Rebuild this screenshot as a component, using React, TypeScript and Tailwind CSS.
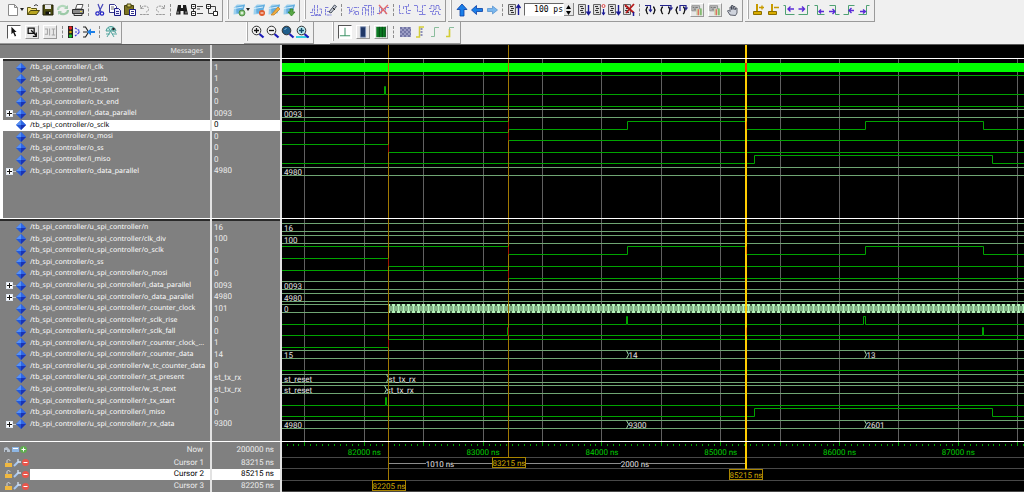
import React, { useEffect, useRef, useState } from 'react';
import clsx from 'clsx';

interface Signal {
  name: string;
  value: string;
  bus?: boolean;
  expandable?: boolean;
  clock?: boolean;
  dense?: number;
  // [time, level] for wires, [time, label] for buses
  points: [number, number | string][];
}

const T0 = 81307;
const T_END = 98000;
const SCALE = 0.1188;
const tx = (t: number) => (t - T0) * SCALE;
const px = (n: number) => Math.round(n - 0.5) + 0.5;

const SCLK: [number, number][] = [[T0, 1], [83215, 0], [84215, 1], [85215, 0], [86215, 1], [87215, 0]];
const MISO: [number, number][] = [[T0, 0], [85284, 1], [87284, 0]];

const TB_SIGNALS: Signal[] = [
  { name: '/tb_spi_controller/i_clk', value: '1', clock: true, points: [] },
  { name: '/tb_spi_controller/i_rstb', value: '1', points: [[T0, 1]] },
  { name: '/tb_spi_controller/i_tx_start', value: '0', points: [[T0, 0], [82168, 1], [82182, 0]] },
  { name: '/tb_spi_controller/o_tx_end', value: '0', points: [[T0, 0]] },
  { name: '/tb_spi_controller/i_data_parallel', value: '0093', bus: true, expandable: true, points: [[T0, '0093']] },
  { name: '/tb_spi_controller/o_sclk', value: '0', points: SCLK },
  { name: '/tb_spi_controller/o_mosi', value: '0', points: [[T0, 1], [83215, 0]] },
  { name: '/tb_spi_controller/o_ss', value: '0', points: [[T0, 1], [82205, 0]] },
  { name: '/tb_spi_controller/i_miso', value: '0', points: MISO },
  { name: '/tb_spi_controller/o_data_parallel', value: '4980', bus: true, expandable: true, points: [[T0, '4980']] },
];

const DUT = '/tb_spi_controller/u_spi_controller/';
const DUT_SIGNALS: Signal[] = [
  { name: DUT + 'n', value: '16', bus: true, points: [[T0, '16']] },
  { name: DUT + 'clk_div', value: '100', bus: true, points: [[T0, '100']] },
  { name: DUT + 'o_sclk', value: '0', points: SCLK },
  { name: '/tb_spi_controller/o_ss', value: '0', points: [[T0, 1], [82205, 0]] },
  { name: DUT + 'o_mosi', value: '0', points: [[T0, 1], [83215, 0]] },
  { name: DUT + 'i_data_parallel', value: '0093', bus: true, expandable: true, points: [[T0, '0093']] },
  { name: DUT + 'o_data_parallel', value: '4980', bus: true, expandable: true, points: [[T0, '4980']] },
  { name: DUT + 'r_counter_clock', value: '101', bus: true, dense: 82205, points: [[T0, '0']] },
  { name: DUT + 'r_sclk_rise', value: '0', points: [[T0, 0], [84205, 1], [84215, 0], [86205, 1], [86215, 0]] },
  { name: DUT + 'r_sclk_fall', value: '0', points: [[T0, 0], [83205, 1], [83215, 0], [85205, 1], [85215, 0], [87205, 1], [87215, 0]] },
  { name: DUT + 'r_counter_clock_...', value: '1', points: [[T0, 0], [82205, 1]] },
  { name: DUT + 'r_counter_data', value: '14', bus: true, points: [[T0, '15'], [84215, '14'], [86215, '13']] },
  { name: DUT + 'w_tc_counter_data', value: '0', points: [[T0, 0]] },
  { name: DUT + 'r_st_present', value: 'st_tx_rx', bus: true, points: [[T0, 'st_reset'], [82195, 'st_tx_rx']] },
  { name: DUT + 'w_st_next', value: 'st_tx_rx', bus: true, points: [[T0, 'st_reset'], [82180, 'st_tx_rx']] },
  { name: DUT + 'r_tx_start', value: '0', points: [[T0, 0], [82178, 1], [82190, 0]] },
  { name: DUT + 'i_miso', value: '0', points: MISO },
  { name: DUT + 'r_rx_data', value: '9300', bus: true, expandable: true, points: [[T0, '4980'], [84215, '9300'], [86215, '2601']] },
];

const CURSORS = [
  { name: 'Cursor 1', time: 83215 },
  { name: 'Cursor 2', time: 85215 },
  { name: 'Cursor 3', time: 82205 },
];

/* ---------- toolbar icons ---------- */

const edge = (d: string) => <path d={d} stroke="#4fa173" strokeWidth="1" fill="none" />;
const purple = (d: string) => <path d={d} stroke="#5a2bd8" strokeWidth="1.4" fill="none" />;
const ghost = (d: string) => <path d={d} stroke="#8080dc" strokeWidth="1" fill="none" strokeDasharray="3 .6" />;

const runDoc = (
  <>
    <path d="M1.500 1.500h7v10h-7z" fill="#dcdcdc" stroke="#666" strokeWidth="1" />
    <path d="M3 3.500h3M4 5.500h3M3 7.500h3M4 9.500h3" stroke="#333" strokeWidth="1" />
  </>
);
const box3d = (
  <>
    <path d="M2 4.500l3-3h8l-2.500 9-9 1z" fill="#9dd0ee" />
    <path d="M4 3.500l9-2-2.500 8-6 1z" fill="#62addf" />
    <path d="M2 5.500l9-1.500" stroke="#d7eefb" strokeWidth="1" />
  </>
);
const lens = (fill: string) => (
  <>
    <path d="M8.500 9l4 3.500" stroke="#1b1bb8" strokeWidth="2.200" />
    <circle cx="5.500" cy="5.500" r="4.300" fill={fill} stroke="#333" strokeWidth="1" />
  </>
);
const addCursor = (
  <>
    <path d="M5 1v8" stroke="#c79a00" strokeWidth="2" />
    <path d="M1.500 8.500h8v3h-8z" fill="#d9ac00" stroke="#8a6e00" strokeWidth="1" />
  </>
);
const braces = (
  <path d="M4 4c-2 0-1 2-2 3 1 1 0 3 2 4M9 4c2 0 1 2 2 3-1 1 0 3-2 4" stroke="#111" strokeWidth="1.300" fill="none" />
);

const ICONS: Record<string, React.ReactNode> = {
  new: <path d="M2.500 1.500h6l3 3v8h-9zM8.500 1.500v3h3" fill="#fff" stroke="#8a8a8a" />,
  open: (
    <>
      <path d="M1.500 11.500v-7h3l1 1h5v2" fill="#f3e27a" stroke="#5d5714" />
      <path d="M1.500 11.500l3-4h9l-3 4z" fill="#b8a520" stroke="#4a450e" />
      <path d="M8 3c2-2 3-1 4 0" stroke="#111" fill="none" />
    </>
  ),
  save: (
    <>
      <path d="M2 2h10v10H2z" fill="#4d4d10" stroke="#1c1c06" />
      <path d="M4 2h6v4H4z" fill="#e9e9e9" />
      <path d="M4.500 8.500h5v3h-5z" fill="#111" />
      <path d="M8 9h1.500v2H8z" fill="#ddd" />
    </>
  ),
  reload: (
    <>
      <path d="M2 7c0-4 6-6 9-2" stroke="#b2d8bb" strokeWidth="2.200" fill="none" />
      <path d="M12 7c0 4-6 6-9 2" stroke="#9ccaa8" strokeWidth="2.200" fill="none" />
      <path d="M12 2v4H8zM2 12V8h4z" fill="#a5cfb0" />
    </>
  ),
  print: (
    <>
      <path d="M4.500 6l1.500-4.500h6L10.500 6z" fill="#fff" stroke="#555" />
      <path d="M1.500 6.500h11v4h-11z" fill="#8a8a8a" stroke="#2e2e2e" />
      <path d="M3 10.500h8v2H3z" fill="#ddd" stroke="#333" />
      <path d="M9 8.500h2" stroke="#e3d343" />
    </>
  ),
  cut: (
    <>
      <path d="M5 1l3 8M10 1L6 9" stroke="#4646b8" strokeWidth="1.200" />
      <circle cx="4.500" cy="10.500" r="1.700" fill="none" stroke="#2323c4" strokeWidth="1.200" />
      <circle cx="9" cy="10.500" r="1.700" fill="none" stroke="#2323c4" strokeWidth="1.200" />
    </>
  ),
  copy: (
    <>
      <path d="M1.500 1.500h5l2 2v6h-7z" fill="#fff" stroke="#35358e" />
      <path d="M3 4h3M3 6h3" stroke="#777" />
      <path d="M6.500 5.500h4l2 2v5h-6z" fill="#e8e8ff" stroke="#1b1b86" />
      <path d="M8 8.500h3M8 10.500h3" stroke="#35358e" />
    </>
  ),
  paste: (
    <>
      <path d="M1.500 2.500h9v9h-9z" fill="#7c7421" stroke="#45400f" />
      <path d="M4 1h4v3H4z" fill="#d9d16d" stroke="#45400f" />
      <path d="M6.500 6.500h6v6h-6z" fill="#fff" stroke="#1b1b86" />
      <path d="M8 8.500h3M8 10.500h3" stroke="#35358e" />
    </>
  ),
  undo: <path d="M2.500 2v3.500H6M3 5C5 2 11 2.500 10.500 6.500 10.300 8 9 9 8 9M2 11.500h9" stroke="#9a9a9a" fill="none" strokeDasharray="2.500 .7" />,
  redo: <path d="M11.500 2v3.500H8M11 5C9 2 3 2.500 3.500 6.500 3.700 8 5 9 6 9M3 11.500h9" stroke="#9a9a9a" fill="none" strokeDasharray="2.500 .7" />,
  find: (
    <>
      <path d="M3 2h3v3h2V2h3l2 9.500H8.500V8h-3v3.500H1z" fill="#1c1c1c" />
      <path d="M3 8.500v2M11 8.500v2" stroke="#bbb" />
    </>
  ),
  collapse: (
    <>
      <path d="M1.500 1.500h4v4h-4zM1.500 8.500h4v4h-4z" fill="#fff" stroke="#222" />
      <path d="M2.500 3.500h2M2.500 10.500h2M7 3.500h6M7 10.500h6M7 6h3M3.500 5v3" stroke="#444" />
    </>
  ),
  expand: (
    <>
      <path d="M1.500 1.500h4v4h-4zM8.500 8.500h4v4h-4z" fill="#fff" stroke="#222" />
      <path d="M2.500 3.500h2M6 3.500h4.500v5M3.500 6v4.500h5" stroke="#444" fill="none" />
    </>
  ),
  wave1: (
    <>
      {box3d}
      <circle cx="10" cy="10" r="3" fill="#79b96b" stroke="#3b7a31" strokeWidth=".7" />
      <path d="M8.500 10h3M10 8.500v3" stroke="#fff" />
    </>
  ),
  wave2: (
    <>
      {box3d}
      <circle cx="10" cy="10" r="3" fill="#df5a2c" />
      <path d="M8.500 10h3" stroke="#fff" />
    </>
  ),
  wave3: (
    <>
      {box3d}
      <path d="M4 12l7-8 2 2-6 6z" fill="#efab42" stroke="#c17d1c" strokeWidth=".7" />
    </>
  ),
  wave4: (
    <>
      {box3d}
      <path d="M8 6h3v3h2l-3.500 4L6 9h2z" fill="#59a846" stroke="#2f7a20" strokeWidth=".7" />
    </>
  ),
  ghostClock: ghost('M1 9.500h2.500V6h2v5.500h6M5.500 2v4M8.500 2v8M2 12.500h10M10.500 6h2v5'),
  ghostPen: (
    <>
      {ghost('M1 4.500h4M1.500 6v6h6M3 8.500h4')}
      <path d="M5 9l5.500-7 2 1.500L7 10z" fill="#c6cad4" stroke="#4b5563" />
      <path d="M9 5l2 2" stroke="#222" />
    </>
  ),
  ghostCut: ghost('M1 4.500h2.500v4H6M3 11l4-7M6.500 8.500c2-3 3 1 1 3M8 4.500h5M9.500 8.500h3v3h-3z'),
  ghostPaste: ghost('M1.500 12V4.500h3v8M7.500 12.500V2.500h3v10M12.500 4v8M3 2.500h6M4 7h3'),
  ghostDelete: (
    <>
      {ghost('M1 10.500h2.500v-6h2v6M9.500 10.500v-6H13')}
      <path d="M3 2l8 9M12 2L3 11" stroke="#e46a6a" strokeWidth="1.400" />
    </>
  ),
  ghostInvert: ghost('M1.500 2v8.500h4M5.500 6V3.500h5V1M8.500 4v6.500h4M10 7.500h3'),
  ghostMirror: ghost('M1 2.500h3.500v6h5v-6H13M6 11.500h7M9.500 9v3'),
  ghostRandom: ghost('M1 5.500h2v-3h3v4h2v-4h3v4h2M2 8.500h2.500v3h3v-3h3v3h2M5.500 7v2'),
  up: <path d="M7 1l5 5.500H9V13H5V6.500H2z" fill="#1b7fe8" stroke="#0b3fa4" strokeWidth=".8" />,
  left: <path d="M1.500 7L6.500 2.500v3h6v3h-6v3z" fill="#1b7fe8" stroke="#0b3fa4" strokeWidth=".8" />,
  right: <path d="M12.500 7L7.500 3v2.500h-5v3h5V11z" fill="#7ab7ee" stroke="#5b96cf" strokeWidth=".8" />,
  restart: (
    <>
      {runDoc}
      <path d="M11.500 12V2.500M9.500 5l2-3 2 3" stroke="#1b1b98" strokeWidth="1.400" fill="none" />
    </>
  ),
  run: (
    <>
      {runDoc}
      <path d="M11.500 2v9M9.500 8.500l2 3 2-3" stroke="#1b1b98" strokeWidth="1.400" fill="none" />
    </>
  ),
  continue: (
    <>
      {runDoc}
      <path d="M11.500 6v6M10 9.500l1.500 2 1.500-2" stroke="#1b1b98" strokeWidth="1.200" fill="none" />
      <circle cx="11.500" cy="3" r="1.500" fill="none" stroke="#dc4545" />
    </>
  ),
  breakRun: (
    <>
      {runDoc}
      <path d="M3 2l9 8M12 1L4 10" stroke="#b71c1c" strokeWidth="1.800" />
      <path d="M11.500 9v4" stroke="#1b1b98" strokeWidth="1.500" />
    </>
  ),
  stepIn: (
    <>
      {braces}
      <path d="M1 2.500h5.500V8M5 6.500L6.500 8.500 8 6.500" stroke="#23238e" strokeWidth="1.200" fill="none" />
    </>
  ),
  stepOver: (
    <>
      {braces}
      <path d="M1 2.500h11V6M10.500 4.500L12 6.500 13.500 4.500" stroke="#23238e" strokeWidth="1.200" fill="none" />
    </>
  ),
  stepOut: (
    <>
      {braces}
      <path d="M6 8V2.500h6V6M10.500 4.500L12 6.500 13.500 4.500" stroke="#23238e" strokeWidth="1.200" fill="none" />
    </>
  ),
  memory: (
    <>
      <path d="M1 2h9v6H1z" fill="#c2c2c2" stroke="#8a8a8a" strokeWidth="1" />
      <path d="M2 4h2M5 4h3M3 6h3" stroke="#666" />
      <path d="M6 6h7v7H6z" fill="#cbd9b2" />
      <path d="M8.500 6v7" stroke="#e2695e" strokeWidth="1.500" />
      <path d="M11.500 5v8" stroke="#6fb263" strokeWidth="1.500" />
    </>
  ),
  hand: (
    <path d="M5 12L2.500 8l1-1L5 8.500V4h1.500v2.500V2.500H8v4l.5-3H10v3.500l.5-2H12v5L10.500 12.500z" fill="#cfd3dc" stroke="#3a3f4c" strokeWidth=".8" />
  ),
  cursorAdd: (
    <>
      {addCursor}
      <path d="M7 4.500h5M10 2.500v4" stroke="#c79a00" strokeWidth="1.400" />
    </>
  ),
  cursorDel: (
    <>
      {addCursor}
      <path d="M7 4.500h5" stroke="#c79a00" strokeWidth="1.500" />
    </>
  ),
  prevEdge: <>{edge('M1.500 2.500h2v9h9')}{purple('M6 6h6M8.500 3.500L6 6l2.500 2.500')}</>,
  nextEdge: <>{edge('M1.500 11.500h9v-9h2')}{purple('M1.500 6h6M5 3.500L7.500 6 5 8.500')}</>,
  prevFall: <>{edge('M2.500 2.500h3v9h7')}{purple('M7 8.500h5M9 6.500l-2 2 2 2')}</>,
  nextFall: <>{edge('M2.500 2.500h6v9h4')}{purple('M2 8.500h5.500M5.500 6l2.500 2.500-2.500 2.500')}</>,
  prevRise: <>{edge('M1.500 11.500h5v-9h6')}{purple('M7 7.500h5M9.500 5L7 7.500 9.500 10')}</>,
  nextRise: <>{edge('M1.500 11.500h8v-9h3')}{purple('M3 8.500h5M6 6.500l2.500 2-2.500 2')}</>,
  select: <path d="M4 1l6 6H7.500l2 4.500-1.500.700-2-4.500L4 9.500z" fill="#111" />,
  zoomBox: (
    <>
      <path d="M2.500 2.500h7v6h-7z" fill="none" stroke="#111" strokeWidth="1.500" />
      <path d="M6 5l6 6M12 7.500V12H8" stroke="#111" strokeWidth="1.500" fill="none" />
    </>
  ),
  zoomEdge: <path d="M1 3.500h3v6H1M6.500 3v8M9 3.500h4M11 3.500v7M9 10.500h4" stroke="#a5a5a5" strokeWidth="1.200" fill="none" />,
  lights: (
    <>
      <path d="M1 1h5v12H1z" fill="#222" />
      <circle cx="3.500" cy="3" r="1.700" fill="#e42222" />
      <circle cx="3.500" cy="7" r="1.300" fill="#d6a400" />
      <circle cx="3.500" cy="11" r="1.700" fill="#19c02c" />
      <path d="M8 3l5 3M8 7h5M8 11l5-4" stroke="#3a3ae0" strokeWidth="1.200" strokeDasharray="2 1" />
    </>
  ),
  merge: (
    <>
      <path d="M1 2h2.500L6 6M1 7h5M1 12h2.500L6 8" stroke="#222" strokeWidth="1.200" fill="none" />
      <path d="M5 7l4-3.500V6h4v2H9v2.500z" fill="#1b7fe8" />
    </>
  ),
  globe: (
    <>
      <path d="M2 6c1-6 9-6 10 0z" fill="#c5ebe6" stroke="#4b9b96" />
      <path d="M4 2l6 10M9 2L3 12M2 9h4M8 9h5M7 4l5 4" stroke="#56a7a1" fill="none" />
      <circle cx="9.500" cy="4" r="1.300" fill="#222" />
    </>
  ),
  zoomIn: <>{lens('#f4f4f4')}<path d="M3 5.500h5M5.500 3v5" stroke="#111" strokeWidth="1.300" /></>,
  zoomOut: <>{lens('#f4f4f4')}<path d="M3 5.500h5" stroke="#111" strokeWidth="1.300" /></>,
  zoomFull: <>{lens('#1f5e8c')}<path d="M3.500 4.500l2-1" stroke="#9fc8e4" /></>,
  zoomCursor: (
    <>
      <path d="M0 12h13" stroke="#38cfe0" strokeWidth="2" />
      {lens('#bdeaf2')}
      <path d="M3 5.500h5M5.500 3v5" stroke="#0d4a66" strokeWidth="1.400" />
    </>
  ),
  modeWave: <path d="M1 11.500h12M7 2v9.500" stroke="#3f9468" strokeWidth="1.200" />,
  modeBlue: <path d="M4 1h6v12H4z" fill="#1f3766" stroke="#7a8fb5" />,
  modeGreen: (
    <>
      <path d="M1.500 1h11v12h-11z" fill="#0a7a22" />
      <path d="M5 1v12M8.500 1v12M12 1v12" stroke="#054012" />
    </>
  ),
  checker: (
    <>
      <path d="M2 2h11v10H2z" fill="#9a9cc4" />
      <path d="M2 3h11M2 7h11M2 11h11" stroke="#7376a6" strokeWidth="2" strokeDasharray="2 2" />
      <path d="M4 5h9M4 9h9" stroke="#7376a6" strokeWidth="2" strokeDasharray="2 2" />
    </>
  ),
  edgeBoth: (
    <>
      <path d="M3 12h3.500V2H11" stroke="#d3cd37" strokeWidth="1.500" fill="none" />
      <path d="M8.500 3v9" stroke="#8e90b8" strokeWidth="2" strokeDasharray="2 1" />
    </>
  ),
  edgeGreen: <path d="M3 11.500h3.500v-9H11" stroke="#8abd9c" fill="none" />,
  edgeYellow: (
    <>
      <path d="M6.500 4v7.500H3" stroke="#d3cd37" strokeWidth="1.700" fill="none" />
      <path d="M6.500 5V2.500H11" stroke="#8abd9c" fill="none" />
    </>
  ),
};

const Tool = ({ icon, variant }: { icon: string; variant?: 'sunken' | 'raised' }) => (
  <button
    type="button"
    aria-label={icon}
    className={clsx('flex h-[17px] shrink-0 items-center justify-center', variant ? 'w-[18px]' : 'w-[15px]')}
  >
    <span
      className={clsx(
        'flex items-center justify-center',
        variant === 'sunken' && 'h-[14px] w-[14px] border border-r-white border-b-white border-l-[#555] border-t-[#555] bg-white',
        variant === 'raised' && 'h-[14px] w-[14px] border border-l-white border-t-white border-r-[#999] border-b-[#999] bg-[#e8e8e8]',
      )}
    >
      <svg viewBox="0 0 14 14" className={clsx('shrink-0', variant ? 'h-3 w-3' : 'h-[14px] w-[14px]')}>{ICONS[icon]}</svg>
    </span>
  </button>
);

const Sep = () => <span className="mx-[3px] h-3 w-px shrink-0 border-l border-dashed border-[#8c8c8c]" />;
const Caret = () => (
  <svg viewBox="0 0 5 5" className="h-[5px] w-[5px] shrink-0"><path d="M0 1h4L2 4z" fill="#222" /></svg>
);

const ToolGroup = ({ children, first, className }: { children: React.ReactNode; first?: boolean; className?: string }) => (
  <div className={clsx('flex h-[22px] shrink-0 items-center border-r border-b border-[#9a9a9a] pr-[3px] pb-[2px]', first ? 'pl-[5px]' : 'pl-[2px]', className)}>
    {!first && <span className="mr-[2px] h-[19px] w-[2px] border-r border-[#a8a8a8] bg-white" />}
    {children}
  </div>
);

const Tools = ({ names }: { names: string[] }) => <>{names.map((n, i) => <Tool key={i} icon={n} />)}</>;

const Toolbar = () => {
  const [runLength, setRunLength] = useState('100 ps');
  return (
    <header className="h-11 overflow-hidden bg-[#f0f0f0]">
      <div className="flex gap-[2px]">
        <ToolGroup first>
          <Tool icon="new" />
          <Caret />
          <Tools names={['open', 'save', 'reload', 'print']} />
          <Sep />
          <Tools names={['cut', 'copy', 'paste', 'undo', 'redo']} />
          <Sep />
          <Tools names={['find', 'collapse', 'expand']} />
        </ToolGroup>
        <ToolGroup>
          <Tool icon="wave1" />
          <Caret />
          <Tools names={['wave2', 'wave3', 'wave4']} />
        </ToolGroup>
        <ToolGroup>
          <Tools names={['ghostClock', 'ghostPen']} />
          <Sep />
          <Tools names={['ghostCut', 'ghostPaste', 'ghostDelete']} />
          <Sep />
          <Tools names={['ghostInvert', 'ghostMirror', 'ghostRandom']} />
        </ToolGroup>
        <ToolGroup>
          <Tools names={['up', 'left', 'right']} />
          <Sep />
          <Tool icon="restart" />
          <input
            aria-label="Run length"
            value={runLength}
            onChange={(e) => setRunLength(e.target.value)}
            className="ml-[3px] h-[13px] w-10 border border-t-[#666] border-l-[#666] border-r-white border-b-white bg-white text-right font-['DejaVu_Sans_Mono',monospace] text-[8px] text-black outline-none"
          />
          <span className="mr-[2px] flex h-[13px] w-[10px] flex-col border-r border-b border-[#888] bg-[#e8e8e8]">
            <button type="button" aria-label="Increase" className="flex h-[6px] items-end justify-center">
              <svg viewBox="0 0 5 4" className="h-1 w-[5px]"><path d="M0 4h5L2.500 0z" /></svg>
            </button>
            <button type="button" aria-label="Decrease" className="flex h-[6px] items-end justify-center">
              <svg viewBox="0 0 5 4" className="h-1 w-[5px]"><path d="M0 0h5L2.500 4z" /></svg>
            </button>
          </span>
          <Tools names={['run', 'continue', 'run', 'breakRun']} />
          <Sep />
          <Tools names={['stepIn', 'stepOver', 'stepOut']} />
          <Tool icon="memory" variant="raised" />
          <Tool icon="memory" variant="raised" />
          <Tool icon="hand" />
        </ToolGroup>
        <ToolGroup>
          <Tools names={['cursorAdd', 'cursorDel', 'prevEdge', 'nextEdge', 'prevFall', 'nextFall', 'prevRise', 'nextRise']} />
        </ToolGroup>
      </div>
      <div className="flex">
        <ToolGroup first>
          <Tool icon="select" variant="sunken" />
          <Tool icon="zoomBox" variant="raised" />
          <Tool icon="zoomEdge" variant="raised" />
          <Sep />
          <Tools names={['lights', 'merge']} />
          <Sep />
          <Tool icon="globe" />
        </ToolGroup>
        <ToolGroup className="ml-[122px]">
          <Tools names={['zoomIn', 'zoomOut', 'zoomFull', 'zoomCursor']} />
        </ToolGroup>
        <ToolGroup className="ml-4">
          <Tool icon="modeWave" variant="sunken" />
          <Tool icon="modeBlue" variant="raised" />
          <Tool icon="modeGreen" variant="raised" />
          <Sep />
          <Tools names={['checker', 'edgeBoth', 'edgeGreen', 'edgeYellow']} />
        </ToolGroup>
      </div>
    </header>
  );
};

/* ---------- wave drawing ---------- */

const CursorLines = ({ height, active }: { height: number; active: number }) => (
  <>
    {CURSORS.map((c, i) => (
      <line
        key={c.name}
        x1={i === active ? Math.round(tx(c.time)) : px(tx(c.time))}
        x2={i === active ? Math.round(tx(c.time)) : px(tx(c.time))}
        y1={0}
        y2={height}
        stroke={i === active ? '#ffcc00' : '#a07800'}
        strokeWidth={i === active ? 2 : 1}
      />
    ))}
  </>
);

const gridTimes = Array.from({ length: 34 }, (_, i) => 81500 + i * 500);
const tickTimes = Array.from({ length: 330 }, (_, i) => 81350 + i * 50);

const Trace = ({ signal, y }: { signal: Signal; y: number }) => {
  const hi = px(y - 4);
  const lo = hi + 8;
  const end = tx(T_END);

  if (signal.clock) return <rect x={0} y={hi - 0.5} width={end} height={9} fill="#00ff00" />;

  if (signal.bus) {
    return (
      <g>
        <path d={`M0 ${hi}H${end}M0 ${lo}H${end}`} stroke="#6fa573" fill="none" />
        {signal.points.map(([t, label], i) => {
          const x = px(tx(t));
          return (
            <g key={i}>
              {i > 0 && <path d={`M${x - 1} ${hi}L${x + 1} ${y}L${x - 1} ${lo}`} stroke="#9fd6a4" fill="none" />}
              <text x={i > 0 ? x + 1 : 2} y={hi + 7.5} fill="#e2e2e2" className="text-[8px]">{label}</text>
            </g>
          );
        })}
        {signal.dense && <rect x={px(tx(signal.dense)) + 0.5} y={hi - 0.5} width={end} height={9} fill="url(#dense)" />}
      </g>
    );
  }

  let d = '';
  signal.points.forEach(([t, level], i) => {
    const ly = level ? hi : lo;
    d += i === 0 ? `M0 ${ly}` : `H${px(tx(t))}V${ly}`;
  });
  return <path d={`${d}H${end}`} stroke="#00a400" fill="none" />;
};

// transitions that sit right under a cursor are drawn over it in red
const Crossings = ({ signals, centre }: { signals: Signal[]; centre: (i: number) => number }) => (
  <>
    {signals.map((s, i) => {
      const hi = px(centre(i) - 4);
      if (s.clock) {
        return CURSORS.map((c, j) => (
          <rect key={c.name} x={Math.floor(tx(c.time)) - (j === 1 ? 1 : 0)} y={hi - 0.5} width={j === 1 ? 2 : 1} height={9} fill={j === 1 ? '#ff3300' : '#c06a00'} />
        ));
      }
      if (s.bus) return null;
      return s.points.slice(1).map(([t]) => {
        const j = CURSORS.findIndex((c) => c.time === t);
        if (j < 0) return null;
        return <path key={`${i}-${t}`} d={`M${px(tx(t))} ${hi}v8`} stroke={j === 1 ? '#ff8a00' : '#a01400'} />;
      });
    })}
  </>
);

const WavePane = ({ signals, height, top, span, active }: { signals: Signal[]; height: number; top: number; span: number; active: number }) => {
  const centre = (i: number) => top + (span / signals.length) * (i + 0.5);
  return (
    <svg height={height} className="block w-0 min-w-0 flex-1 overflow-hidden bg-black">
      <defs>
        <pattern id="dense" width="5" height="9" patternUnits="userSpaceOnUse" y="4">
          <rect width="5" height="9" fill="#3f5f42" />
          <rect width="3" height="2" fill="#b5f5ba" />
          <rect y="7" width="3" height="2" fill="#b5f5ba" />
          <rect y="2" width="5" height="5" fill="#86b58a" />
          <rect x="1" y="2" width="1" height="5" fill="#b5f5ba" />
        </pattern>
      </defs>
      {gridTimes.map((t) => (
        <line key={t} x1={px(tx(t))} x2={px(tx(t))} y1={0} y2={height} stroke="#606060" />
      ))}
      {signals.map((s, i) => <Trace key={i} signal={s} y={centre(i)} />)}
      <CursorLines height={height} active={active} />
      <Crossings signals={signals} centre={centre} />
    </svg>
  );
};

const Timeline = ({ active }: { active: number }) => {
  const ref = useRef<SVGSVGElement>(null);
  const [width, setWidth] = useState(742);

  useEffect(() => {
    const measure = () => ref.current && setWidth(ref.current.getBoundingClientRect().width);
    measure();
    window.addEventListener('resize', measure);
    return () => window.removeEventListener('resize', measure);
  }, []);

  const rowY = [15, 27, 38];
  const tags = CURSORS.map((c, i) => ({ ...c, x: Math.round(tx(c.time)), y: rowY[i] }));
  const labels = gridTimes.filter((t) => t % 1000 === 0 && tx(t) < width - 20);

  return (
    <svg ref={ref} height={50} className="block w-0 min-w-0 flex-1 overflow-hidden bg-black">
      {tickTimes.map((t) => (
        <line key={t} x1={px(tx(t))} x2={px(tx(t))} y1={t % 500 ? 2 : 0} y2={4} stroke="#00a000" />
      ))}
      {labels.map((t) => (
        <text key={t} x={tx(t)} y={13} textAnchor="middle" fill="#00cc00" className="text-[8px]">{t} ns</text>
      ))}
      {[15, 26, 38, 49].map((y) => <path key={y} d={`M0 ${y}.5H${tx(T_END)}`} stroke="#484848" />)}
      <path d={`M${tags[2].x} 21.500H${tags[1].x}`} stroke="#8c8c8c" />
      {[{ x: 158, label: '1010 ns' }, { x: 353, label: '2000 ns' }].map((d) => (
        <g key={d.label}>
          <rect x={d.x - 14} y={18} width={28} height={7} fill="#000" />
          <text x={d.x} y={25} textAnchor="middle" fill="#e2e2e2" className="text-[8px]">{d.label}</text>
        </g>
      ))}
      {tags.map((c, i) => (
        <g key={c.name}>
          <line x1={i === active ? c.x : px(tx(c.time))} x2={i === active ? c.x : px(tx(c.time))} y1={0} y2={c.y} stroke={i === active ? '#ffcc00' : '#a07800'} strokeWidth={i === active ? 2 : 1} />
          <rect x={c.x - 16.5} y={c.y + 0.5} width={33} height={10} fill="#000" stroke="#a88400" />
          <text x={c.x} y={c.y + 9} textAnchor="middle" fill="#d0a800" className="text-[8px]">{c.time} ns</text>
        </g>
      ))}
    </svg>
  );
};

/* ---------- left columns ---------- */

const Diamond = () => (
  <svg viewBox="0 0 10 10" className="h-[10px] w-[10px] shrink-0">
    <path d="M5 0l5 5-5 5-5-5z" fill="#2458d8" />
    <path d="M5 0L0 5h5z" fill="#5a92f2" />
    <path d="M5 0l5 5H5z" fill="#2f68e6" />
    <path d="M5 10l5-5H5z" fill="#1a34b4" />
  </svg>
);

interface PaneProps {
  signals: Signal[];
  selected: string | null;
  onSelect: (name: string) => void;
  namesClass: string;
  rowClass: string;
  listClass: string;
  children: React.ReactNode;
}

const SignalPane = ({ signals, selected, onSelect, namesClass, rowClass, listClass, children }: PaneProps) => (
  <section className="flex border-t border-white">
    <div className={clsx('w-[212px] shrink-0 border-r-2 border-[#e2e2e2] border-l-white', namesClass)}>
      <ul className={clsx("grid auto-rows-fr border-t-2 border-[#2a2a2a] pt-px font-['Noto_Sans',sans-serif] text-[7px] leading-none", listClass)}>
        {signals.map((s, i) => (
          <li
            key={i}
            onClick={() => onSelect(s.name)}
            className={clsx('flex min-h-0 items-center', rowClass, s.name === selected ? 'bg-white text-black' : 'text-white')}
          >
            <span className="flex w-[10px] shrink-0 items-center">
              {s.expandable && (
                <>
                  <button type="button" aria-label={`Expand ${s.name}`} className="flex h-[7px] w-[7px] items-center justify-center border border-[#dfe6f0] bg-white">
                    <svg viewBox="0 0 5 5" className="h-[5px] w-[5px]"><path d="M0 2.500h5M2.500 0v5" stroke="#111" /></svg>
                  </button>
                  <span className="h-px flex-1 bg-[#c4c4c4]" />
                </>
              )}
            </span>
            <Diamond />
            <span className="ml-1 whitespace-nowrap">{s.name}</span>
          </li>
        ))}
      </ul>
    </div>
    <div className="w-[70px] shrink-0 border-r-2 border-[#e2e2e2]">
      <ul className={clsx('grid auto-rows-fr border-t-2 border-[#2a2a2a] pt-px', listClass)}>
        {signals.map((s, i) => (
          <li key={i} className={clsx('flex min-h-0 items-center pl-[2px]', s.name === selected ? 'bg-white text-black' : 'text-[#ececec]')}>
            {s.value}
          </li>
        ))}
      </ul>
    </div>
    {children}
  </section>
);

const CursorIcons = () => (
  <span className="flex w-[25px] shrink-0 items-center gap-px">
    <svg viewBox="0 0 7 8" className="h-2 w-[7px]"><path d="M2 4V2c0-2 3-2 3 0" stroke="#d8d8d8" fill="none" /><path d="M0 4h7v4H0z" fill="#f0b840" /></svg>
    <svg viewBox="0 0 8 8" className="h-2 w-2"><path d="M1 7l4-4" stroke="#a8c8f0" strokeWidth="2" /><path d="M5 0v3h3" stroke="#d4e4f8" fill="none" strokeWidth="1.300" /></svg>
    <svg viewBox="0 0 7 7" className="h-[7px] w-[7px]"><circle cx="3.500" cy="3.500" r="3.500" fill="#e8564c" /><path d="M1.500 3.500h4" stroke="#fff" strokeWidth="1" /></svg>
  </span>
);

const App: React.FC = () => {
  const [selected, setSelected] = useState('/tb_spi_controller/o_sclk');
  const [active, setActive] = useState(1);

  return (
    <main className="min-h-screen overflow-hidden bg-[#808080] font-['Roboto',sans-serif] text-[8px] leading-none text-[#ececec] [text-rendering:geometricPrecision]">
      <Toolbar />

      <div className="flex h-[14px] border-t border-[#5a5a5a]">
        <div className="flex w-[212px] shrink-0 items-center justify-end border-r-2 border-[#d8d8d8] pr-[7px] font-['Noto_Sans',sans-serif] text-[7px] leading-none">Messages</div>
        <div className="w-[70px] shrink-0 border-r-2 border-[#d8d8d8]" />
        <svg height={13} className="block w-0 min-w-0 flex-1 bg-black">
          <CursorLines height={13} active={active} />
        </svg>
      </div>

      <SignalPane
        signals={TB_SIGNALS}
        selected={selected}
        onSelect={setSelected}
        namesClass="border-l-[3px]"
        rowClass="pl-[3px]"
        listClass="h-[118px]"
      >
        <WavePane signals={TB_SIGNALS} height={159} top={3} span={115} active={active} />
      </SignalPane>

      <SignalPane
        signals={DUT_SIGNALS}
        selected={null}
        onSelect={setSelected}
        namesClass="border-l-0"
        rowClass="pl-[6px]"
        listClass="h-[211px]"
      >
        <WavePane signals={DUT_SIGNALS} height={222} top={3} span={208} active={active} />
      </SignalPane>

      <section className="flex border-t border-white">
        <div className="w-[212px] shrink-0 border-r-2 border-[#e2e2e2]">
          <div className="flex h-[15px] items-center justify-between pr-[7px] pl-[4px]">
            <span className="flex items-center gap-px">
              <svg viewBox="0 0 7 7" className="h-[7px] w-[7px]"><path d="M0 6V2l3-1 3 3v2z" fill="#b9c3cf" /><path d="M1 5h2" stroke="#333" /></svg>
              <svg viewBox="0 0 7 7" className="h-[7px] w-[7px]"><path d="M0 1h7v5H0z" fill="#8db6e4" /><path d="M1 2h5v1H1z" fill="#fff" /></svg>
              <svg viewBox="0 0 7 7" className="h-[7px] w-[7px]"><circle cx="3.500" cy="3.500" r="3.500" fill="#5fae4f" /><path d="M1.500 3.500h4M3.500 1.500v4" stroke="#fff" /></svg>
            </span>
            <span>Now</span>
          </div>
          <div className="grid h-[35px] auto-rows-fr">
            {CURSORS.map((c, i) => (
              <div key={c.name} className="flex min-h-0 items-stretch pl-[5px]" onClick={() => setActive(i)}>
                <CursorIcons />
                <span className={clsx('flex flex-1 items-center justify-end pr-[6px]', i === active && 'bg-white text-black')}>{c.name}</span>
              </div>
            ))}
          </div>
        </div>
        <div className="w-[70px] shrink-0 border-r-2 border-[#e2e2e2]">
          <div className="flex h-[15px] items-center justify-end pr-[6px]">200000 ns</div>
          <div className="grid h-[35px] auto-rows-fr">
            {CURSORS.map((c, i) => (
              <div key={c.name} className={clsx('flex min-h-0 items-center justify-end pr-[6px]', i === active && 'bg-white text-black')}>
                {c.time} ns
              </div>
            ))}
          </div>
        </div>
        <Timeline active={active} />
      </section>
    </main>
  );
};

export default App;
